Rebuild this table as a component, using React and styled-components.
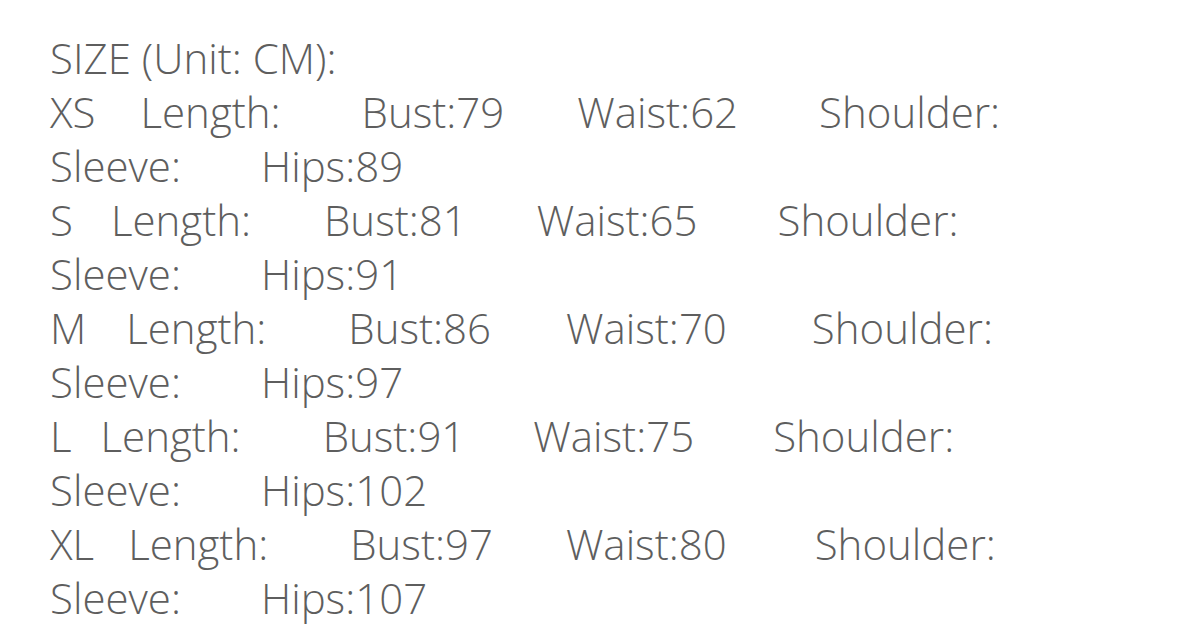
import React from 'react'
import styled, { createGlobalStyle } from 'styled-components'

const GlobalStyle = createGlobalStyle`
  html, body {
    margin: 0;
    padding: 0;
    background: #ffffff;
  }
`

const Page = styled.div`
  width: 1179px;
  height: 624px;
  box-sizing: border-box;
  padding: 31px 0 0 50px;
  background: #ffffff;
  color: #5e5e5e;
  font-family: 'Open Sans', 'Lato', sans-serif;
  font-weight: 300;
  font-size: 42px;
  line-height: 54px;
`

const Title = styled.div``

const Line = styled.div`
  display: flex;
  align-items: baseline;
  white-space: nowrap;
`

const Field = styled.span`
  margin-left: ${p => p.$gap || 0}px;
`

// gaps: after size label, after Length, after Bust, after Waist
const sizes = [
  { label: 'XS', gaps: [45, 81, 73, 81], bust: 79, waist: 62, hips: 89 },
  { label: 'S', gaps: [38, 73, 70, 80], bust: 81, waist: 65, hips: 91 },
  { label: 'M', gaps: [40, 82, 75, 85], bust: 86, waist: 70, hips: 97 },
  { label: 'L', gaps: [29, 82, 68, 79], bust: 91, waist: 75, hips: 102 },
  { label: 'XL', gaps: [34, 82, 73, 88], bust: 97, waist: 80, hips: 107 },
]

const App = () => (
  <Page>
    <GlobalStyle />
    <Title>SIZE (Unit: CM):</Title>
    {sizes.map(s => (
      <React.Fragment key={s.label}>
        <Line>
          <Field>{s.label}</Field>
          <Field $gap={s.gaps[0]}>Length:</Field>
          <Field $gap={s.gaps[1]}>Bust:{s.bust}</Field>
          <Field $gap={s.gaps[2]}>Waist:{s.waist}</Field>
          <Field $gap={s.gaps[3]}>Shoulder:</Field>
        </Line>
        <Line>
          <Field>Sleeve:</Field>
          <Field $gap={80}>Hips:{s.hips}</Field>
        </Line>
      </React.Fragment>
    ))}
  </Page>
)

export default App
